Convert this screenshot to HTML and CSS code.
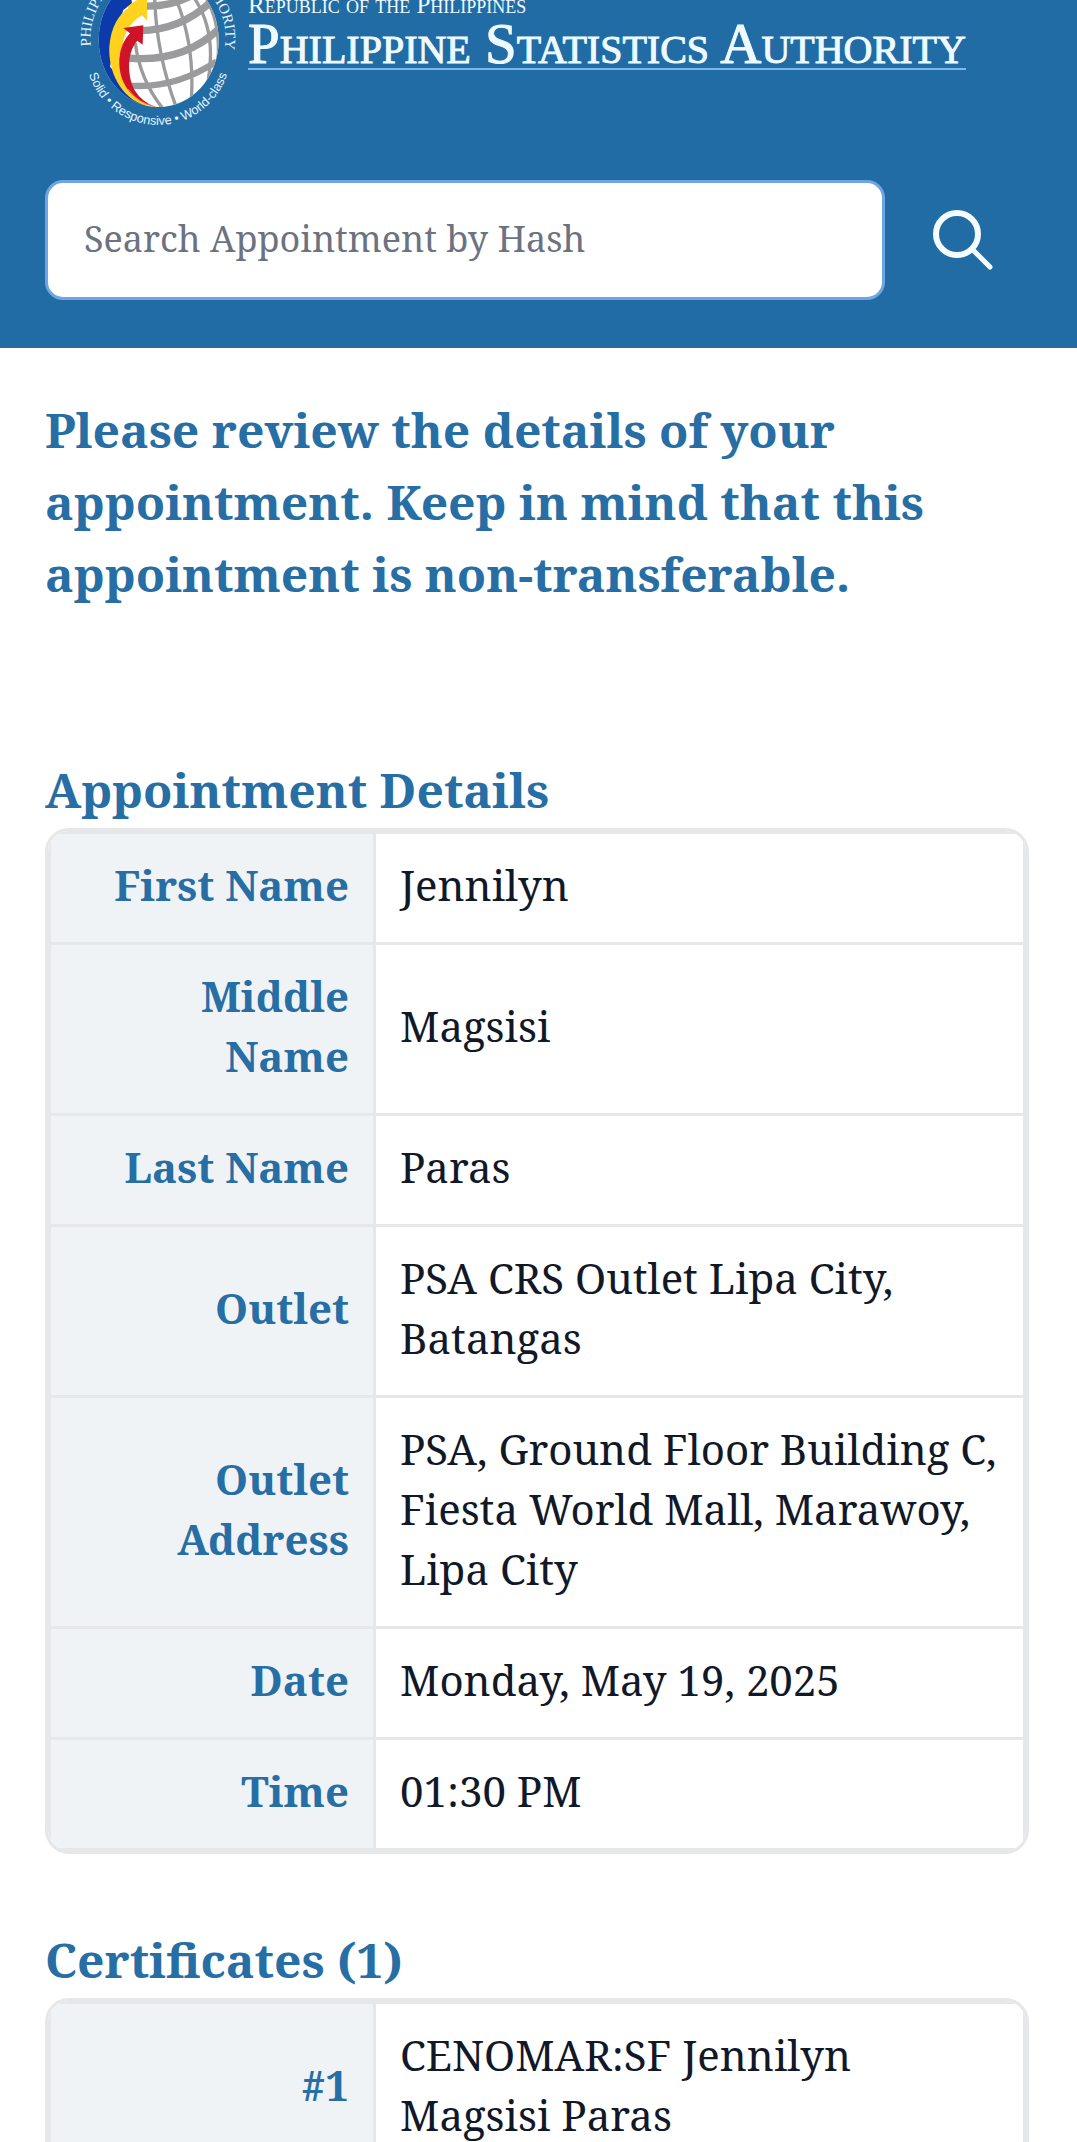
FILE: index.html
```html
<!DOCTYPE html>
<html lang="en">
<head>
<meta charset="utf-8">
<meta name="viewport" content="width=device-width, initial-scale=1">
<title>Appointment – Philippine Statistics Authority</title>
<link rel="stylesheet" href="styles.css">
</head>
<body>
<header class="site-header">
  <div class="brand">
    <svg class="emblem" viewBox="-45 0 600 432" aria-hidden="true">
      <defs>
        <clipPath id="globe"><ellipse cx="296" cy="120" rx="180" ry="201"/></clipPath>
        <path id="arc-left" d="M93 138 A204 204 0 0 1 296 -90"/>
        <path id="arc-right" d="M296 -90 A204 204 0 0 1 494 148"/>
        <path id="arc-bottom" d="M77 158 A217 217 0 0 0 511 158"/>
      </defs>
      <g clip-path="url(#globe)">
        <rect x="100" y="-90" width="400" height="420" fill="#fff"/>
        <g fill="none" stroke="#9b9b9d">
          <g stroke-width="22">
            <path d="M250 18 Q340 22 410 -22"/>
            <path d="M240 92 Q360 90 450 8"/>
            <path d="M200 174 Q370 190 480 84"/>
            <path d="M200 256 Q340 270 470 184" stroke-width="19"/>
          </g>
          <g stroke-width="10">
            <path d="M284 -10 Q288 160 350 325"/>
            <path d="M345 -10 Q405 130 394 300"/>
            <path d="M400 -10 Q470 90 445 240"/>
            <path d="M226 130 Q240 240 308 325"/>
            <path d="M440 0 Q482 70 474 180"/>
          </g>
        </g>
        <path fill="#0b3bab" d="M160 -20 H212 L216 10 L190 30 L170 90 L150 200 L260 322 H90 V-20Z"/>
      </g>
      <path fill="#ffd21f" d="M202 20 Q230 -2 252 -10 L261 0 V62 L246 46 C190 78 176 145 190 218 C204 268 232 304 272 320 C190 306 144 222 148 140 C152 84 176 42 206 24Z"/>
      <path fill="#d01427" d="M190 84 L250 76 L248 134 L232 122 C198 160 202 232 226 274 Q246 306 284 320 C212 302 174 244 178 176 Q182 128 210 100Z"/>
      <path fill="none" stroke="#f58a3c" stroke-width="3" d="M205 268 Q236 312 286 320"/>
      <g fill="#e4f5ff">
        <text class="ring-name"><textPath href="#arc-left">PHILIPPINE</textPath></text>
        <text class="ring-name" text-anchor="end"><textPath href="#arc-right" startOffset="100%">AUTHORITY</textPath></text>
        <text class="ring-motto" text-anchor="middle"><textPath href="#arc-bottom" startOffset="50%">Solid • Responsive • World-class</textPath></text>
      </g>
    </svg>
    <div class="wordmark">
      <p class="republic">Republic of the Philippines</p>
      <p class="agency">Philippine Statistics Authority</p>
    </div>
  </div>
  <form class="search" role="search">
    <input class="search-input" type="search" aria-label="Search Appointment by Hash" placeholder="Search Appointment by Hash">
    <button class="search-button" type="submit" aria-label="Search">
      <svg class="search-icon" viewBox="0 0 72 72" fill="none" stroke="currentColor" stroke-width="6" stroke-linecap="round" aria-hidden="true">
        <circle cx="30" cy="30" r="21"/>
        <path d="M45 45 L63 63" stroke-width="5"/>
      </svg>
    </button>
  </form>
</header>
<main class="content">
  <h1 class="heading notice">Please review the details of your appointment. Keep in mind that this appointment is non-transferable.</h1>
  <section class="section">
    <h2 class="heading section-title" id="details">Appointment Details</h2>
    <div class="card">
      <table class="details" aria-labelledby="details">
        <tbody>
          <tr><th scope="row">First Name</th><td>Jennilyn</td></tr>
          <tr><th scope="row">Middle Name</th><td>Magsisi</td></tr>
          <tr><th scope="row">Last Name</th><td>Paras</td></tr>
          <tr><th scope="row">Outlet</th><td>PSA CRS Outlet Lipa City, Batangas</td></tr>
          <tr><th scope="row">Outlet Address</th><td>PSA, Ground Floor Building C, Fiesta World Mall, Marawoy, Lipa City</td></tr>
          <tr><th scope="row">Date</th><td>Monday, May 19, 2025</td></tr>
          <tr><th scope="row">Time</th><td>01:30 PM</td></tr>
        </tbody>
      </table>
    </div>
  </section>
  <section class="section">
    <h2 class="heading section-title" id="certificates">Certificates (1)</h2>
    <div class="card">
      <table class="details" aria-labelledby="certificates">
        <tbody>
          <tr><th scope="row">#1</th><td>CENOMAR:SF Jennilyn Magsisi Paras</td></tr>
        </tbody>
      </table>
    </div>
  </section>
</main>
</body>
</html>
```
FILE: styles.css
```css
* { box-sizing: border-box; }

body {
  margin: 0;
  background: #fff;
  color: #111827;
  font-family: "Noto Serif", "Droid Serif", "DejaVu Serif", serif;
  font-size: 42px;
  line-height: 60px;
}

.site-header {
  padding: 0 36px 45px 45px;
  background: #216ca5;
  border-bottom: 3px solid #2b6a94;
}

.brand {
  display: flex;
  gap: 3px;
  margin-bottom: 36px;
}

.emblem {
  flex: none;
  width: 200px;
  height: 144px;
  overflow: visible;
}

.ring-name { font: 44px "Liberation Serif", serif; }
.ring-motto { font: 38px "Liberation Sans", sans-serif; }

.wordmark {
  align-self: flex-start;
  border-bottom: 2px solid #7ab8ec;
  color: #effaff;
  font-family: "Liberation Serif", serif;
  font-variant: small-caps;
  white-space: nowrap;
}

.republic {
  margin: 0;
  font-size: 25px;
  line-height: 10px;
}

.agency {
  margin: 0;
  padding-top: 10px;
  font-size: 57px;
  line-height: 48px;
  -webkit-text-stroke: 1px currentColor;
}

.search { display: flex; }

.search-input {
  flex: 1;
  min-width: 0;
  height: 120px;
  padding: 0 36px 3px;
  border: 3px solid #6fa5e0;
  border-radius: 18px;
  background: #fff;
  color: inherit;
  font-family: inherit;
  font-size: 36px;
  appearance: none;
}

.search-input::placeholder { color: #6b7280; opacity: 1; }

.search-button {
  display: grid;
  place-items: center;
  width: 156px;
  padding: 0;
  border: 0;
  background: none;
  color: #f3fbff;
}

.search-icon { width: 72px; height: 72px; }

.content { padding: 46px 48px 48px 45px; }

.heading {
  margin: 0;
  color: #276ea5;
  font-size: 48px;
  font-weight: 700;
  line-height: 72px;
}

.notice { margin-bottom: 144px; }

.section { margin-bottom: 70px; }

.section-title { margin-bottom: 2px; }

.card {
  overflow: hidden;
  border: 3px solid #e5e7e9;
  border-radius: 24px;
}

.details {
  width: 100%;
  border-collapse: collapse;
}

.details th,
.details td {
  padding: 21px 24px 27px;
  border: 3px solid #e5e7e9;
}

.details th {
  width: calc(100% / 3);
  background: #f0f3f6;
  color: #276ea5;
  text-align: right;
}
```
